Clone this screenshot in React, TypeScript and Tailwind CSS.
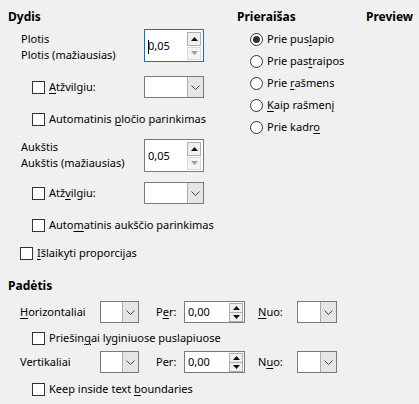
import React from 'react'

const U = ({ children }: { children: React.ReactNode }) => <span className="underline underline-offset-2">{children}</span>

const Check = ({ children, className = '' }: { children: React.ReactNode; className?: string }) => (
  <div className={`flex items-center h-4 ${className}`}>
    <div className="w-[13px] h-[13px] border border-[#333] bg-white shrink-0" />
    <span className="ml-[4px] whitespace-nowrap">{children}</span>
  </div>
)

const Radio = ({ checked, children }: { checked?: boolean; children: React.ReactNode }) => (
  <div className="flex items-center h-[22px]">
    <div className="w-[13px] h-[13px] rounded-full border border-[#333] bg-white flex items-center justify-center shrink-0">
      {checked && <div className="w-[7px] h-[7px] rounded-full bg-[#333]" />}
    </div>
    <span className="ml-[4px] whitespace-nowrap">{children}</span>
  </div>
)

const Chevron = () => (
  <svg width="9" height="5" viewBox="0 0 9 5" fill="none">
    <path d="M0.5 0.5 L4.5 4.5 L8.5 0.5" stroke="#444" strokeWidth="1" />
  </svg>
)

const Dropdown = ({ w }: { w: string }) => (
  <div className={`flex h-[22px] border border-[#7a7a7a] bg-white ${w}`}>
    <div className="flex-1" />
    <div className="w-[16px] bg-[#e5e5e5] border-l border-[#adadad] flex items-center justify-center">
      <Chevron />
    </div>
  </div>
)

const Arrow = ({ up, dim }: { up?: boolean; dim?: boolean }) => (
  <svg width="7" height="4" viewBox="0 0 7 4">
    <path d={up ? 'M0 4 L3.5 0 L7 4 Z' : 'M0 0 L3.5 4 L7 0 Z'} fill={dim ? '#a0a0a0' : '#111'} />
  </svg>
)

// big spin box in the Dydis block
const BigSpin = ({ value, focused }: { value: string; focused?: boolean }) => (
  <div className={`relative flex w-[60px] h-[33px] bg-white border ${focused ? 'border-[#0078d7]' : 'border-[#7a7a7a]'}`}>
    <div className="flex-1 flex items-center pl-[3px]">
      {focused && <div className="absolute left-[3px] top-[10px] w-px h-[14px] bg-black" />}
      {value}
    </div>
    <div className="flex flex-col justify-center gap-px pr-[2px]">
      <div className="w-[14px] h-[14px] border border-[#adadad] bg-[#f0f0f0] flex items-center justify-center"><Arrow up /></div>
      <div className="w-[14px] h-[13px] border border-[#d9d9d9] bg-[#f4f4f4] flex items-center justify-center"><Arrow dim /></div>
    </div>
  </div>
)

const SmallSpin = ({ value }: { value: string }) => (
  <div className="flex w-[61px] h-[22px] bg-white border border-[#7a7a7a]">
    <div className="flex-1 flex items-center pl-[3px]">{value}</div>
    <div className="flex flex-col justify-center pr-px">
      <div className="w-[14px] h-[10px] border border-[#adadad] bg-[#f0f0f0] flex items-center justify-center"><Arrow up /></div>
      <div className="w-[14px] h-[9px] border border-t-0 border-[#adadad] bg-[#f0f0f0] flex items-center justify-center"><Arrow /></div>
    </div>
  </div>
)

export default function App() {
  return (
    <div className="w-[419px] h-[404px] bg-[#f0f0f0] text-[11px] leading-4 text-black pl-2 pt-[9px] overflow-hidden" style={{ fontFamily: '"Noto Sans", "Open Sans", sans-serif' }}>
      <div className="flex">
        {/* Dydis */}
        <div className="w-[229px]">
          <div className="font-bold text-[12px]">Dydis</div>
          <div className="flex mt-[4px] pl-[13px]">
            <div className="w-[123px] pt-[2px]">
              <div>Plotis</div>
              <div>Plotis (mažiausias)</div>
            </div>
            <BigSpin value="0,05" focused />
          </div>
          <div className="flex items-center mt-[13px] pl-[24px]">
            <Check className="w-[112px]"><U>A</U>tžvilgiu:</Check>
            <Dropdown w="w-[60px]" />
          </div>
          <Check className="mt-[13px] ml-[24px]">Automatinis <U>p</U>ločio parinkimas</Check>
          <div className="flex mt-[12px] pl-[13px]">
            <div className="w-[123px]">
              <div>Aukštis</div>
              <div>Aukštis (mažiausias)</div>
            </div>
            <BigSpin value="0,05" />
          </div>
          <div className="flex items-center mt-[10px] pl-[24px]">
            <Check className="w-[112px]">Atž<U>v</U>ilgiu:</Check>
            <Dropdown w="w-[60px]" />
          </div>
          <Check className="mt-[13px] ml-[24px]">Auto<U>m</U>atinis aukščio parinkimas</Check>
          <Check className="mt-[12px] ml-[12px]"><U>I</U>šlaikyti proporcijas</Check>
        </div>

        {/* Prieraišas */}
        <div className="w-[129px]">
          <div className="font-bold text-[12px]">Prieraišas</div>
          <div className="mt-[3px] pl-[13px]">
            <Radio checked>Prie pus<U>l</U>apio</Radio>
            <Radio>Prie pas<U>t</U>raipos</Radio>
            <Radio>Prie <U>r</U>ašmens</Radio>
            <Radio><U>K</U>aip rašmenį</Radio>
            <Radio>Prie kadr<U>o</U></Radio>
          </div>
        </div>
        <div className="font-bold text-[12px]">Preview</div>
      </div>

      {/* Padėtis */}
      <div className="font-bold text-[12px] mt-[17px]">Padėtis</div>
      <div className="flex items-center mt-[7px] pl-[12px]">
        <span className="w-[80px]"><U>H</U>orizontaliai</span>
        <Dropdown w="w-[39px]" />
        <span className="w-[28px] ml-[17px]">P<U>e</U>r:</span>
        <SmallSpin value="0,00" />
        <span className="w-[39px] ml-[13px]"><U>N</U>uo:</span>
        <Dropdown w="w-[40px]" />
      </div>
      <Check className="mt-[7px] ml-[24px]">Priešin<U>g</U>ai lyginiuose puslapiuose</Check>
      <div className="flex items-center mt-[5px] pl-[12px]">
        <span className="w-[80px]">Vertikaliai</span>
        <Dropdown w="w-[39px]" />
        <span className="w-[28px] ml-[17px]">Per:</span>
        <SmallSpin value="0,00" />
        <span className="w-[39px] ml-[13px]">N<U>u</U>o:</span>
        <Dropdown w="w-[40px]" />
      </div>
      <Check className="mt-[8px] ml-[24px]">Keep inside text <U>b</U>oundaries</Check>
    </div>
  )
}
